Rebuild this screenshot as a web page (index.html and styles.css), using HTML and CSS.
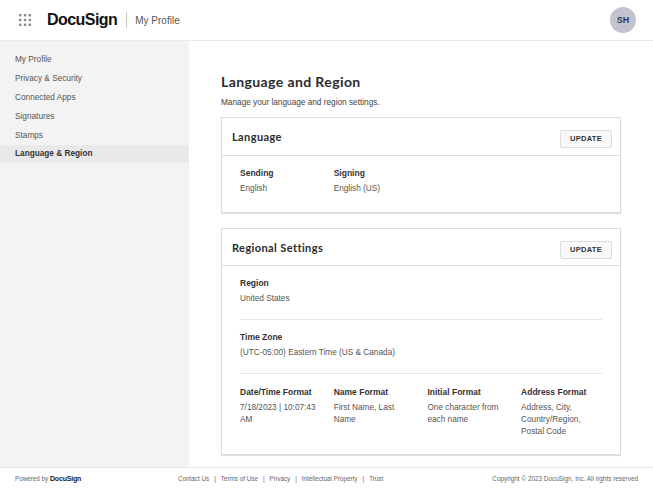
FILE: index.html
```html
<!DOCTYPE html>
<html lang="en">
<head>
<meta charset="utf-8">
<title>Language and Region</title>
<link rel="stylesheet" href="styles.css">
</head>
<body>
<header class="topbar">
  <div class="brand">
    <svg class="grid-icon" width="12" height="12" viewBox="0 0 12 12" aria-hidden="true">
      <g fill="#8a8a8a">
        <rect x="0" y="0" width="2.4" height="2.4"/><rect x="4.8" y="0" width="2.4" height="2.4"/><rect x="9.6" y="0" width="2.4" height="2.4"/>
        <rect x="0" y="4.8" width="2.4" height="2.4"/><rect x="4.8" y="4.8" width="2.4" height="2.4"/><rect x="9.6" y="4.8" width="2.4" height="2.4"/>
        <rect x="0" y="9.6" width="2.4" height="2.4"/><rect x="4.8" y="9.6" width="2.4" height="2.4"/><rect x="9.6" y="9.6" width="2.4" height="2.4"/>
      </g>
    </svg>
    <span class="logo">DocuSign</span>
    <span class="divider"></span>
    <span class="app-name">My Profile</span>
  </div>
  <div class="avatar">SH</div>
</header>
<div class="shell">
  <nav class="sidebar">
    <a class="nav-item">My Profile</a>
    <a class="nav-item">Privacy &amp; Security</a>
    <a class="nav-item">Connected Apps</a>
    <a class="nav-item">Signatures</a>
    <a class="nav-item">Stamps</a>
    <a class="nav-item active">Language &amp; Region</a>
  </nav>
  <main class="content">
    <h1 class="page-title">Language and Region</h1>
    <p class="page-sub">Manage your language and region settings.</p>
    <section class="card card-language">
      <div class="card-head">
        <h2 class="card-title">Language</h2>
        <button class="update">UPDATE</button>
      </div>
      <div class="card-body">
        <div class="cols">
          <div class="field"><div class="label">Sending</div><div class="value">English</div></div>
          <div class="field"><div class="label">Signing</div><div class="value">English (US)</div></div>
        </div>
      </div>
    </section>
    <section class="card card-region">
      <div class="card-head">
        <h2 class="card-title">Regional Settings</h2>
        <button class="update">UPDATE</button>
      </div>
      <div class="card-body">
        <div class="block">
          <div class="label">Region</div><div class="value">United States</div>
        </div>
        <div class="block">
          <div class="label">Time Zone</div><div class="value">(UTC-05:00) Eastern Time (US &amp; Canada)</div>
        </div>
        <div class="block last">
          <div class="cols">
            <div class="field"><div class="label">Date/Time Format</div><div class="value">7/18/2023 | 10:07:43 AM</div></div>
            <div class="field"><div class="label">Name Format</div><div class="value">First Name, Last Name</div></div>
            <div class="field"><div class="label">Initial Format</div><div class="value">One character from each name</div></div>
            <div class="field"><div class="label">Address Format</div><div class="value">Address, City, Country/Region, Postal Code</div></div>
          </div>
        </div>
      </div>
    </section>
  </main>
</div>
<footer class="footer">
  <div class="powered">Powered by <span class="mini-logo">DocuSign</span></div>
  <div class="links">
    <span>Contact Us</span><i>|</i><span>Terms of Use</span><i>|</i><span>Privacy</span><i>|</i><span>Intellectual Property</span><i>|</i><span>Trust</span>
  </div>
  <div class="copy">Copyright © 2023 DocuSign, Inc. All rights reserved</div>
</footer>
</body>
</html>
```
FILE: styles.css
```css
* { box-sizing: border-box; }
html, body { margin: 0; height: 490px; overflow: hidden; }
body {
  display: flex;
  flex-direction: column;
  background: #fff;
  font-family: "Liberation Sans", Arial, sans-serif;
  font-size: 8.25px;
  color: #4a4a4a;
}
.topbar {
  height: 41px;
  flex: none;
  display: flex;
  align-items: center;
  justify-content: space-between;
  padding: 0 17px 0 19px;
  border-bottom: 1px solid #e9e9e9;
}
.brand { display: flex; align-items: center; }
.logo {
  margin-left: 16px;
  font-size: 16px;
  font-weight: 700;
  letter-spacing: -0.55px;
  color: #111;
}
.divider { width: 1px; height: 16px; margin: 0 8px 0 9px; background: #ccc; }
.app-name { font-size: 10px; color: #555; }
.avatar {
  width: 26px;
  height: 26px;
  border-radius: 50%;
  background: #c3c3d0;
  color: #33384e;
  font-size: 9px;
  font-weight: 700;
  display: flex;
  align-items: center;
  justify-content: center;
}
.shell { flex: 1; display: flex; min-height: 0; }
.sidebar { width: 189px; flex: none; background: #f3f3f3; padding-top: 9px; }
.nav-item { display: block; height: 19px; line-height: 19px; padding-left: 15px; color: #555; }
.nav-item.active { background: #e9e9e9; color: #333; font-weight: 700; height: 18px; line-height: 18px; }
.content { flex: 1; padding: 31px 32px 0; }
.page-title {
  margin: 0;
  font-family: "Lato", sans-serif;
  font-size: 14px;
  line-height: 20px;
  font-weight: 700;
  letter-spacing: 0.4px;
  color: #2b2b2b;
}
.page-sub { margin: 5px 0 0; line-height: 12px; color: #444; }
.card {
  width: 400px;
  background: #fff;
  border: 1px solid #dcdcdc;
  box-shadow: 0 1px 1px rgba(0,0,0,.12);
}
.card-language { height: 96px; margin: 8px 0 15px; }
.card-region { height: 227px; }
.card-head {
  height: 38px;
  display: flex;
  align-items: center;
  justify-content: space-between;
  padding: 0 8px 0 10px;
  border-bottom: 1px solid #dcdcdc;
}
.card-region .card-head { height: 37px; padding-top: 1px; }
.card-title {
  margin: 0;
  font-family: "Lato", sans-serif;
  font-size: 11px;
  font-weight: 700;
  letter-spacing: 0.4px;
  color: #2b2b2b;
}
.update {
  width: 52px;
  height: 18px;
  margin-top: 4px;
  padding: 0;
  background: #f8f8f8;
  border: 1px solid #dcdcdc;
  border-radius: 2px;
  font-family: "Liberation Sans", Arial, sans-serif;
  font-size: 7.5px;
  font-weight: 700;
  letter-spacing: 0.3px;
  color: #333;
}
.card-body { padding: 11px 18px 0; }
.cols { display: flex; }
.field { flex: 0 0 93.7px; padding-right: 10px; }
.field:last-child { flex: 0 0 81px; padding-right: 0; }
.label { font-size: 8.5px; font-weight: 700; color: #333; line-height: 13px; }
.value { margin-top: 3px; line-height: 12px; color: #555; }
.block { padding-bottom: 14px; margin-bottom: 11px; border-bottom: 1px solid #e6e6e6; }
.block.last { padding-bottom: 0; margin-bottom: 0; border-bottom: 0; padding-top: 1px; }
.footer {
  height: 23px;
  flex: none;
  display: flex;
  align-items: center;
  border-top: 1px solid #e6e6e6;
  padding: 0 15px 2px;
  font-size: 6.3px;
  color: #666;
}
.powered { width: 163px; flex: none; }
.mini-logo { font-size: 7px; font-weight: 700; color: #222; letter-spacing: -0.2px; }
.links { display: flex; gap: 5px; }
.links i { font-style: normal; }
.copy { margin-left: auto; font-size: 6.4px; }
```
